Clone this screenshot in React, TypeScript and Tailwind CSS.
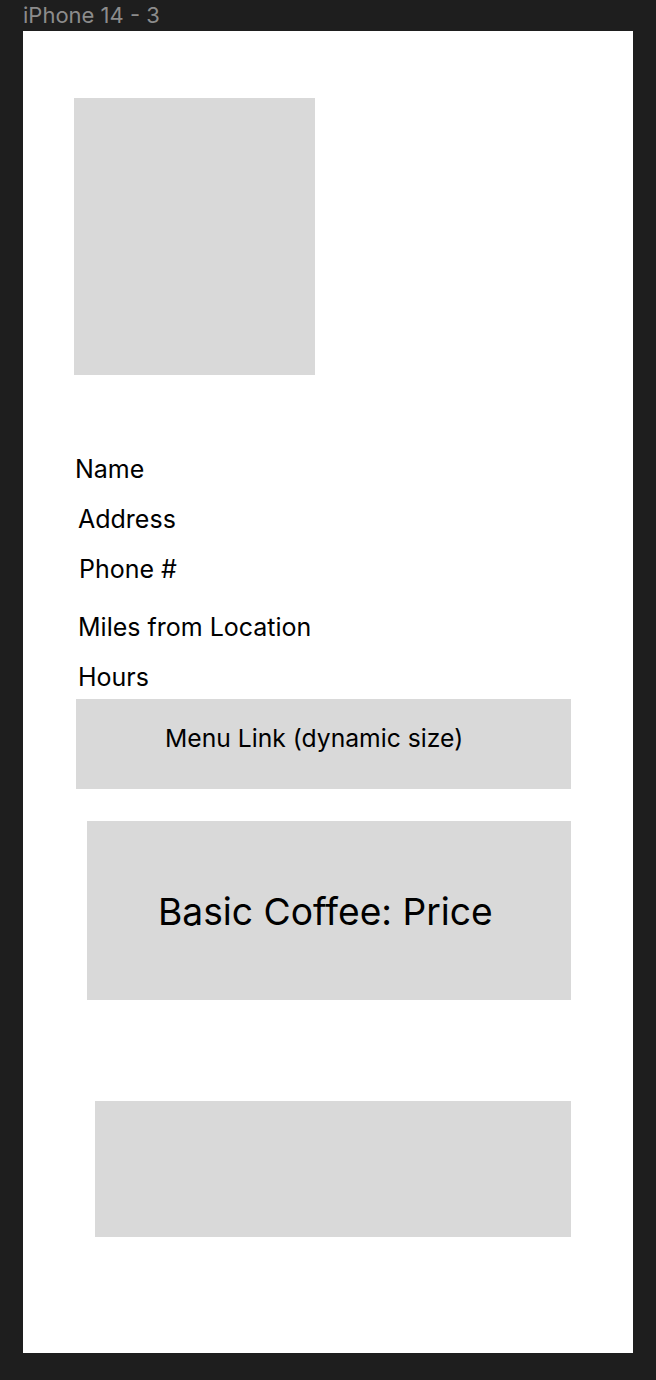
import React from "react";

export default function App() {
  return (
    <div
      className="w-[656px] h-[1380px] bg-[#1e1e1e] overflow-hidden"
      style={{ fontFamily: "Inter, 'Noto Sans', sans-serif" }}
    >
      <div className="h-[31px] pl-[23px] text-[22px] leading-[31px] text-[#8c8c8c]">
        iPhone 14 - 3
      </div>
      <div className="ml-[23px] w-[610px] h-[1322px] bg-white pt-[67px] text-black">
        <div className="ml-[51px] w-[241px] h-[277px] bg-[#d9d9d9]" />
        <div className="mt-[69px] text-[25px]">
          <div className="ml-[52px] h-[50px] leading-[50px]">Name</div>
          <div className="ml-[55px] h-[50px] leading-[50px]">Address</div>
          <div className="ml-[56px] h-[50px] leading-[50px]">Phone #</div>
          <div className="ml-[55px] mt-[8px] h-[50px] leading-[50px]">Miles from Location</div>
          <div className="ml-[55px] h-[47px] leading-[50px]">Hours</div>
        </div>
        <div className="ml-[53px] w-[495px] h-[90px] bg-[#d9d9d9] pl-[89px] pt-[24px] text-[24.7px] leading-[30px]">
          Menu Link (dynamic size)
        </div>
        <div className="ml-[64px] mt-[32px] w-[484px] h-[179px] bg-[#d9d9d9] pl-[71px] pt-[69px] text-[37.2px] leading-[44px]">
          Basic Coffee: Price
        </div>
        <div className="ml-[72px] mt-[101px] w-[476px] h-[136px] bg-[#d9d9d9]" />
      </div>
    </div>
  );
}
